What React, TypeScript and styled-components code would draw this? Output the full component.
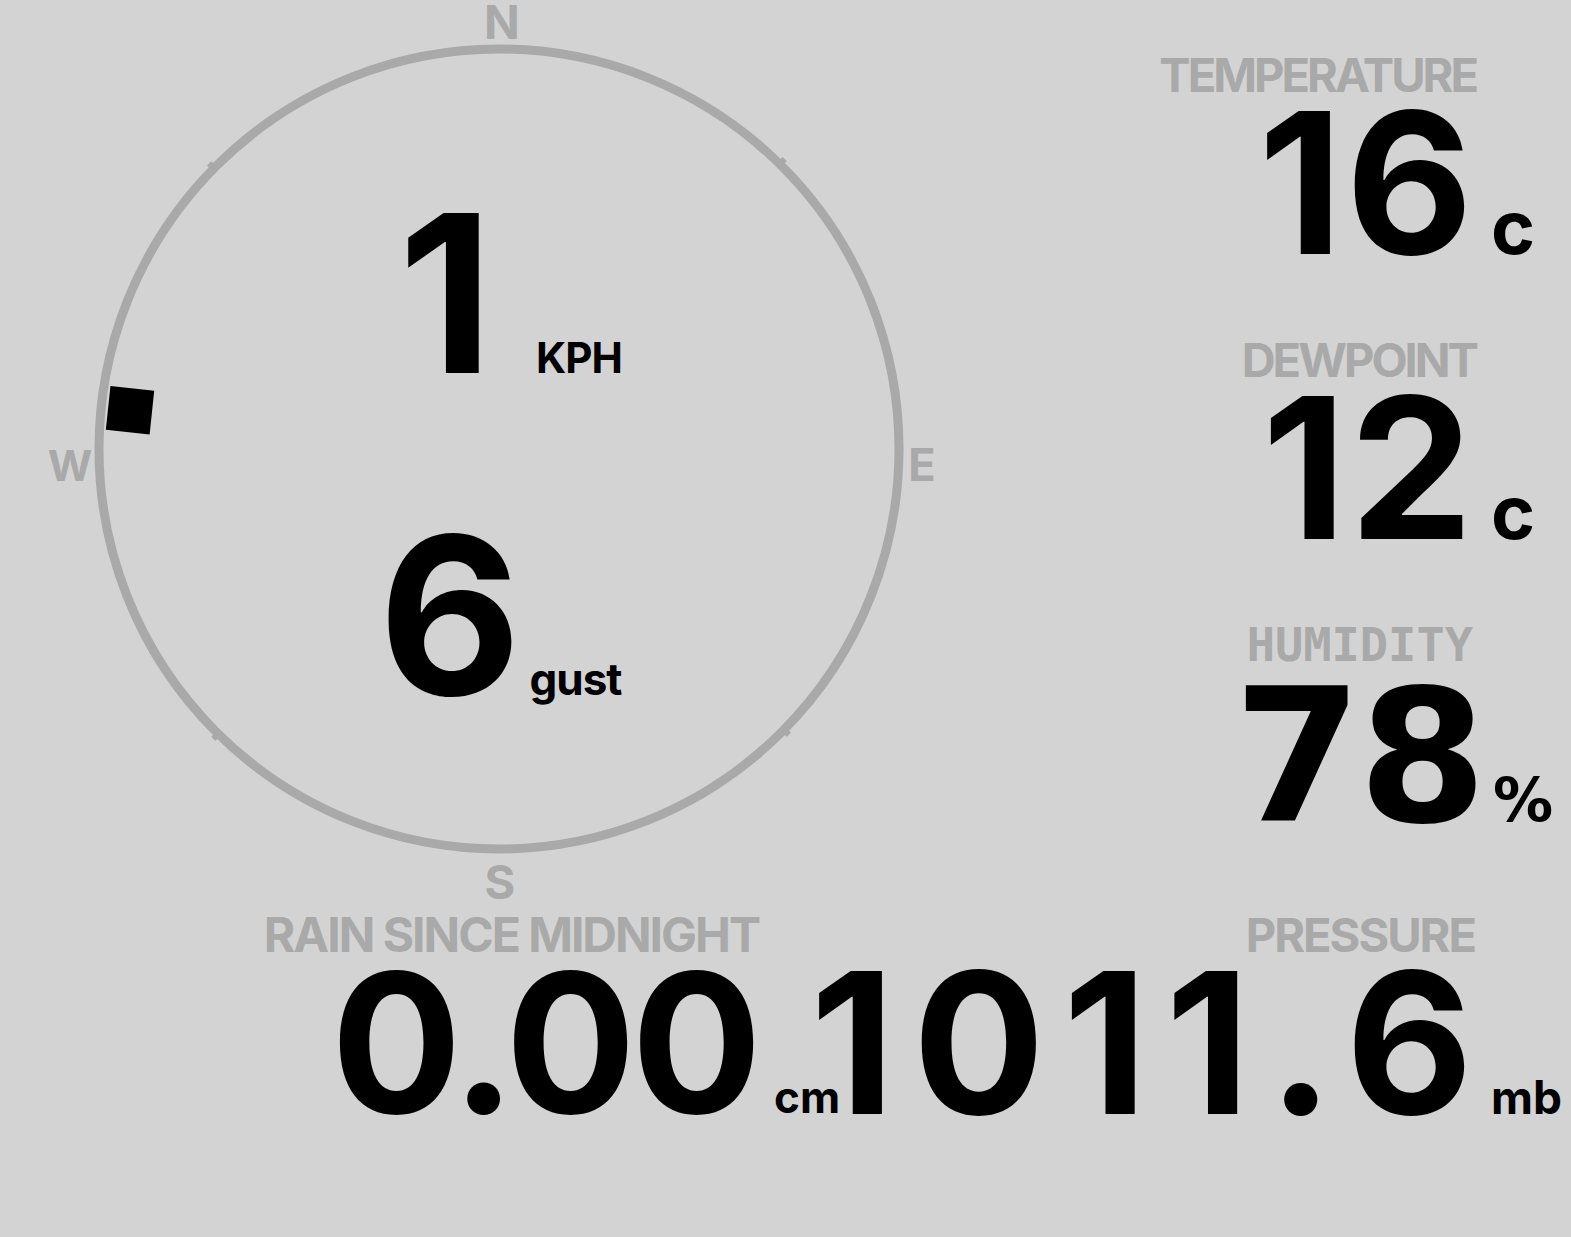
import styled, { createGlobalStyle, css } from 'styled-components';

type Face = 'din' | 'mono' | 'verdana';

const GlobalStyle = createGlobalStyle`
    html, body {
        margin: 0;
        background: #d3d3d3;
    }
    body {
        font-family: Inter, "Noto Sans", sans-serif;
    }
`;

const faces = {
    din: css`
        font-family: Inter, "Noto Sans", sans-serif;
    `,
    mono: css`
        font-family: "DejaVu Sans Mono", monospace;
    `,
    verdana: css`
        font-family: "DejaVu Sans", sans-serif;
    `,
};

const Board = styled.main`
    display: flex;
    flex-direction: column;
    width: 1571px;
    height: 1237px;
    box-sizing: border-box;
    padding-right: 98px;
    color: #000;
`;

const TopRow = styled.div`
    display: flex;
    justify-content: space-between;
    height: 905px;
`;

const BottomRow = styled.div`
    display: grid;
    grid-template-columns: 757px minmax(0, 1fr);
    justify-items: end;
    padding-top: 5px;
`;

/* Kompassen med vindhastighet i mitten */
const CompassFace = styled.section`
    position: relative;
    width: 1000px;
    display: flex;
    flex-direction: column;
    justify-content: center;
    align-items: center;
    padding-top: 2px;
`;

const Dial = styled.svg`
    position: absolute;
    inset: 0;
`;

const SpeedRow = styled.div<{ $nudge?: number }>`
    display: flex;
    align-items: baseline;
    justify-content: center;
    font-weight: 700;
    height: 322px;
    padding-left: ${(p) => p.$nudge ?? 0}px;
`;

const SpeedValue = styled.span`
    font-size: 220px;
    line-height: 322px;
    letter-spacing: -2px;
`;

const SpeedUnit = styled.span<{ $gap: number; $size: number }>`
    font-size: ${(p) => p.$size}px;
    letter-spacing: -1px;
    margin-left: ${(p) => p.$gap}px;
`;

const ReadingStack = styled.div`
    display: flex;
    flex-direction: column;
    align-items: flex-end;
    gap: 70px;
    padding-top: 50px;
`;

const Reading = styled.div<{ $face: Face }>`
    ${(p) => faces[p.$face]};
    display: flex;
    flex-direction: column;
    align-items: flex-end;
    font-weight: 700;
`;

const Label = styled.div<{ $size: number; $spacing?: number }>`
    font-size: ${(p) => p.$size}px;
    line-height: 50px;
    letter-spacing: ${(p) => p.$spacing ?? 0}px;
    margin-right: ${(p) => p.$spacing ?? 0}px;
    color: #a9a9a9;
    white-space: nowrap;
`;

const ValueRow = styled.div<{ $face?: Face; $drop?: number }>`
    ${(p) => p.$face && faces[p.$face]};
    display: flex;
    align-items: baseline;
    height: 165px;
    padding-top: ${(p) => p.$drop ?? 0}px;
    box-sizing: border-box;
`;

/* Negativ marginal tar bort mellanrummet efter sista siffran */
const Figure = styled.span<{ $size: number; $spacing?: number; $hang?: number }>`
    font-size: ${(p) => p.$size}px;
    line-height: 165px;
    letter-spacing: ${(p) => p.$spacing ?? 0}px;
    margin-right: ${(p) => -(p.$hang ?? p.$spacing ?? 0)}px;
    white-space: nowrap;
`;

/* Enheten hänger utanför kolumnen, till höger om talet */
const Unit = styled.span<{ $size: number; $gap: number }>`
    font-size: ${(p) => p.$size}px;
    width: 0;
    text-indent: ${(p) => p.$gap}px;
    white-space: nowrap;
`;

const cx = 499;
const cy = 449;
const r = 400;

const Compass = ({ bearing }: { bearing: number }) => {
    const ticks = [45, 135, 225, 315];
    return (
        <Dial width="1000" height="905" viewBox="0 0 1000 905">
            <circle cx={cx} cy={cy} r={r} fill="none" stroke="#a9a9a9" strokeWidth="9" />
            {ticks.map((t) => (
                <rect
                    key={t}
                    x={cx - 6}
                    y={cy - r - 7}
                    width="6"
                    height="9"
                    fill="#a9a9a9"
                    transform={`rotate(${t} ${cx} ${cy})`}
                />
            ))}
            <rect
                x={cx - 22}
                y={cy - 393}
                width="44"
                height="44"
                fill="#000"
                transform={`rotate(${bearing} ${cx} ${cy})`}
            />
            <g fill="#a9a9a9" fontFamily="Inter, sans-serif" fontWeight="700" textAnchor="middle">
                <text x="502" y="39" fontSize="47">N</text>
                <text x="500" y="899" fontSize="47">S</text>
                <text x="70" y="481" fontSize="43">W</text>
                <text x="922" y="481" fontSize="45">E</text>
            </g>
        </Dial>
    );
};

const App = () => {
    return (
        <Board>
            <GlobalStyle />
            <TopRow>
                <CompassFace>
                    <Compass bearing={276} />
                    <SpeedRow $nudge={20}>
                        <SpeedValue>1</SpeedValue>
                        <SpeedUnit $size={42} $gap={45}>KPH</SpeedUnit>
                    </SpeedRow>
                    <SpeedRow>
                        <SpeedValue>6</SpeedValue>
                        <SpeedUnit $size={44} $gap={10}>gust</SpeedUnit>
                    </SpeedRow>
                </CompassFace>

                <ReadingStack>
                    <Reading $face="din">
                        <Label $size={47} $spacing={-3}>TEMPERATURE</Label>
                        <ValueRow>
                            <Figure $size={196} $spacing={3}>16</Figure>
                            <Unit $size={75} $gap={18}>c</Unit>
                        </ValueRow>
                    </Reading>
                    <Reading $face="din">
                        <Label $size={47} $spacing={-3}>DEWPOINT</Label>
                        <ValueRow>
                            <Figure $size={196} $spacing={3}>12</Figure>
                            <Unit $size={75} $gap={18}>c</Unit>
                        </ValueRow>
                    </Reading>
                    <Reading $face="mono">
                        <Label $size={47}>HUMIDITY</Label>
                        <ValueRow $face="verdana" $drop={5}>
                            <Figure $size={185} $spacing={-4} $hang={10}>78</Figure>
                            <Unit $size={60} $gap={20}>%</Unit>
                        </ValueRow>
                    </Reading>
                </ReadingStack>
            </TopRow>

            <BottomRow>
                <Reading $face="din">
                    <Label $size={48} $spacing={-2}>RAIN SINCE MIDNIGHT</Label>
                    <ValueRow>
                        <Figure $size={194} $spacing={-5} $hang={0}>0.00</Figure>
                        <Unit $size={44} $gap={17}>cm</Unit>
                    </ValueRow>
                </Reading>

                <Reading $face="din">
                    <Label $size={47} $spacing={-2}>PRESSURE</Label>
                    <ValueRow>
                        <Figure $size={196} $spacing={18}>1011.6</Figure>
                        <Unit $size={46} $gap={18}>mb</Unit>
                    </ValueRow>
                </Reading>
            </BottomRow>
        </Board>
    );
};

export default App;
